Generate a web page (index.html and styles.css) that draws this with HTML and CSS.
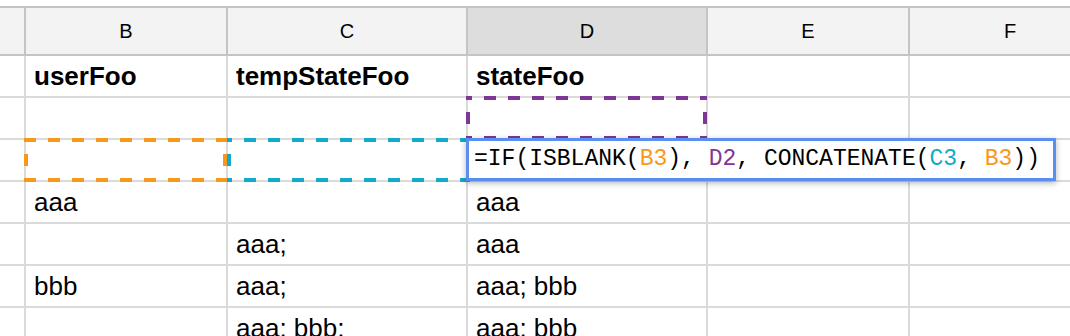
FILE: index.html
```html
<!DOCTYPE html>
<html>
<head>
<meta charset="utf-8">
<link rel="stylesheet" href="styles.css">
</head>
<body>
<div class="sheet">
  <div class="row head">
    <div class="cell rh"></div>
    <div class="cell colB">B</div>
    <div class="cell colC">C</div>
    <div class="cell colD active">D</div>
    <div class="cell colE">E</div>
    <div class="cell colF">F</div>
  </div>
  <div class="row">
    <div class="cell rh"></div>
    <div class="cell colB bold">userFoo</div>
    <div class="cell colC bold">tempStateFoo</div>
    <div class="cell colD bold">stateFoo</div>
    <div class="cell colE"></div>
    <div class="cell colF"></div>
  </div>
  <div class="row">
    <div class="cell rh"></div>
    <div class="cell colB"></div>
    <div class="cell colC"></div>
    <div class="cell colD"><span class="ref ref-purple"></span></div>
    <div class="cell colE"></div>
    <div class="cell colF"></div>
  </div>
  <div class="row">
    <div class="cell rh"></div>
    <div class="cell colB"><span class="ref ref-orange"></span></div>
    <div class="cell colC"><span class="ref ref-cyan"></span></div>
    <div class="cell colD">
      <div class="editor">=IF(ISBLANK(<span class="c-orange">B3</span>), <span class="c-purple">D2</span>, CONCATENATE(<span class="c-cyan">C3</span>, <span class="c-orange">B3</span>))</div>
    </div>
    <div class="cell colE"></div>
    <div class="cell colF"></div>
  </div>
  <div class="row">
    <div class="cell rh"></div>
    <div class="cell colB">aaa</div>
    <div class="cell colC"></div>
    <div class="cell colD">aaa</div>
    <div class="cell colE"></div>
    <div class="cell colF"></div>
  </div>
  <div class="row">
    <div class="cell rh"></div>
    <div class="cell colB"></div>
    <div class="cell colC">aaa;</div>
    <div class="cell colD">aaa</div>
    <div class="cell colE"></div>
    <div class="cell colF"></div>
  </div>
  <div class="row">
    <div class="cell rh"></div>
    <div class="cell colB">bbb</div>
    <div class="cell colC">aaa;</div>
    <div class="cell colD">aaa; bbb</div>
    <div class="cell colE"></div>
    <div class="cell colF"></div>
  </div>
  <div class="row">
    <div class="cell rh"></div>
    <div class="cell colB"></div>
    <div class="cell colC">aaa; bbb;</div>
    <div class="cell colD">aaa; bbb</div>
    <div class="cell colE"></div>
    <div class="cell colF"></div>
  </div>
</div>
</body>
</html>
```

FILE: styles.css
```css
html, body {
  margin: 0;
  padding: 0;
  background: #ffffff;
  overflow: hidden;
}

.sheet {
  padding-top: 6px;
  width: 1070px;
  overflow: hidden;
  font-family: "Liberation Sans", Arial, sans-serif;
  color: #000;
}

.row {
  display: flex;
  width: 1200px;
}

.cell {
  position: relative;
  flex: none;
  box-sizing: border-box;
  height: 42px;
  line-height: 40px;
  font-size: 26px;
  padding-left: 8px;
  border-right: 2px solid #dadada;
  border-bottom: 2px solid #dadada;
  white-space: nowrap;
}

.rh { width: 26px; padding: 0; }
.colB { width: 202px; }
.colC { width: 240px; }
.colD { width: 240px; }
.colE { width: 202px; }
.colF { width: 202px; }

.bold { font-weight: bold; }

.head {
  border-top: 2px solid #c4c4c4;
}

.head .cell {
  height: 48px;
  line-height: 46px;
  font-size: 20px;
  padding: 0;
  text-align: center;
  background: #f3f3f3;
  border-right: 2px solid #c4c4c4;
  border-bottom: 2px solid #c4c4c4;
}

.head .cell.active {
  background: #dddddd;
}

/* range reference highlights: 12px dashes, 12px gaps, 4px thick */
.ref {
  --c: #000;
  --ox: 0px;
  position: absolute;
  top: -2px;
  left: -2px;
  height: 44px;
  z-index: 2;
  background:
    linear-gradient(to right, var(--c) 12px, transparent 12px) var(--ox) 0 / 24px 4px repeat-x,
    linear-gradient(to right, var(--c) 12px, transparent 12px) var(--ox) 100% / 24px 4px repeat-x,
    linear-gradient(to bottom, var(--c) 12px, transparent 12px) 0 16px / 4px 24px repeat-y,
    linear-gradient(to bottom, var(--c) 12px, transparent 12px) 100% 16px / 4px 24px repeat-y;
}

.ref-purple {
  --c: #7e3794;
  --ox: -6px;
  width: 241px;
}

.ref-orange {
  --c: #f7981d;
  --ox: 0px;
  width: 203px;
}

.ref-cyan {
  --c: #11a9cc;
  --ox: -7px;
  left: -1px;
  width: 243px;
}

.c-orange { color: #f7981d; }
.c-purple { color: #7e3794; }
.c-cyan { color: #11a9cc; }

/* formula editor */
.editor {
  position: absolute;
  top: -2px;
  left: -2px;
  width: 590px;
  height: 43px;
  box-sizing: border-box;
  border: 3px solid #5a8ef0;
  background: #fff;
  box-shadow: 0 2px 6px rgba(0, 0, 0, 0.3);
  z-index: 3;
  padding-left: 5px;
  font-family: "Liberation Mono", "DejaVu Sans Mono", monospace;
  font-size: 23px;
  line-height: 37px;
  color: #000;
  white-space: nowrap;
}
```
